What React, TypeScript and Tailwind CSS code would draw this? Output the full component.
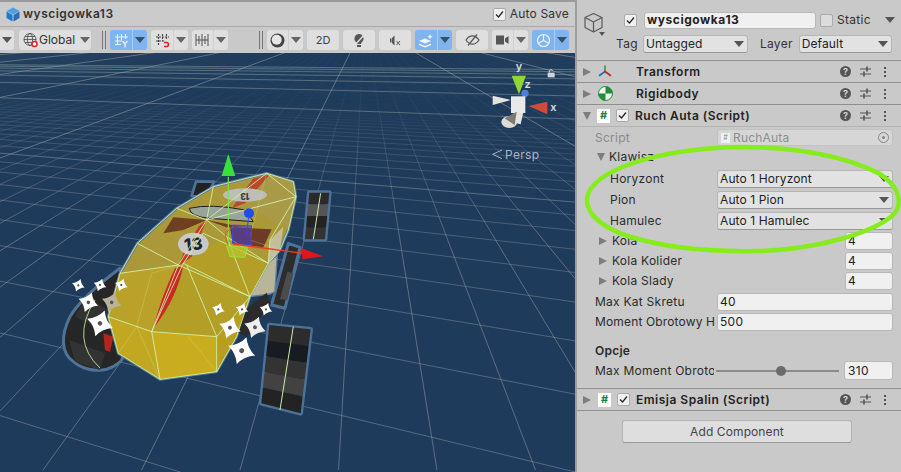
import type { ReactNode } from 'react';

const sans = 'font-["Inter","Liberation_Sans",sans-serif]';

const Caret = ({ className = 'border-t-[#555]' }: { className?: string }) => (
  <span className={`block w-0 h-0 border-x-[5px] border-x-transparent border-t-[6px] ${className}`} />
);

const ToolBtn = ({ w, active, split, children, className = '' }: { w: number; active?: boolean; split?: boolean; children: ReactNode; className?: string }) => (
  <div
    style={{ width: w }}
    className={`h-5 rounded-[3px] flex items-center shrink-0 ${active ? 'bg-[#80b4ef]' : 'bg-[#dfdfdf]'} ${className}`}
  >
    <div className="flex-1 flex items-center justify-center">{children}</div>
    {split && (
      <div className={`w-[15px] h-full flex items-center justify-center border-l ${active ? 'border-[#a9cdf5]' : 'border-[#cfcfcf]'}`}>
        <Caret className={active ? 'border-t-[#34506f]' : 'border-t-[#666]'} />
      </div>
    )}
  </div>
);

const Sep = ({ className = '' }: { className?: string }) => (
  <div className={`flex gap-[2px] h-[18px] shrink-0 ${className}`}>
    <div className="w-px bg-[#777]" />
    <div className="w-px bg-[#777]" />
  </div>
);

const Toolbar = () => (
  <div className={`h-[27px] flex items-center bg-[#c9c9c9] border-t border-[#aaa] overflow-hidden ${sans}`}>
    <ToolBtn w={14} className="rounded-l-none">
      <Caret />
    </ToolBtn>
    <div className="ml-[5px] w-[72px] h-5 rounded-[3px] bg-[#dfdfdf] flex items-center shrink-0 pl-[4px] gap-[1px] text-[12px] text-[#333]">
      <svg width="15" height="16" viewBox="0 0 15 16" fill="none" stroke="#555" strokeWidth="0.9">
        <circle cx="7" cy="7.5" r="6" />
        <ellipse cx="7" cy="7.5" rx="2.6" ry="6" />
        <path d="M1 7.5h12M2 4.5h10M2 10.5h10" />
        <circle cx="11.5" cy="12" r="2.5" fill="#fff" stroke="#d8232a" strokeWidth="1.5" />
      </svg>
      <span>Global</span>
      <Caret className="ml-[4px] border-t-[#666]" />
    </div>
    <Sep className="ml-[11px]" />
    <ToolBtn w={37} active split className="ml-[4px]">
      <svg width="15" height="15" viewBox="0 0 15 15" fill="none" stroke="#e8f2ff" strokeWidth="1.1">
        <path d="M3.500 1v10M7.500 1v6M11.500 1v5M1 4h13M1 8h7M1 11.500h6" />
        <path d="M8.500 8l2.500 3 2.500-3M11 11v3.500" strokeWidth="1.300" />
      </svg>
    </ToolBtn>
    <ToolBtn w={37} split className="ml-[4px]">
      <svg width="15" height="15" viewBox="0 0 15 15" fill="none" stroke="#444" strokeWidth="1.100">
        <path d="M3.500 1v11M7.500 1v7M11.500 1v6M1 4h13M1 8h9" strokeDasharray="2 1" />
        <path d="M9 9.500h2.500a2 2 0 010 4H9" stroke="#d8232a" strokeWidth="1.600" />
      </svg>
    </ToolBtn>
    <ToolBtn w={36} split className="ml-[4px]">
      <svg width="15" height="14" viewBox="0 0 15 14" fill="none" stroke="#555" strokeWidth="1">
        <path d="M1 1v12M4 3v8M7 1v12M10 3v8M13 1v12M1 7h12" />
      </svg>
    </ToolBtn>
    <Sep className="ml-[31px]" />
    <ToolBtn w={36} split className="ml-[4px]">
      <svg width="15" height="15" viewBox="0 0 15 15">
        <circle cx="7.500" cy="7.500" r="7" fill="#444" />
        <circle cx="6.700" cy="6.700" r="5" fill="#e6e6e6" />
      </svg>
    </ToolBtn>
    <ToolBtn w={32} className="ml-[4px]">
      <span className="text-[11px] text-[#444]">2D</span>
    </ToolBtn>
    <ToolBtn w={32} className="ml-[4px]">
      <svg width="14" height="15" viewBox="0 0 14 15" fill="#555">
        <path d="M7 1a4.600 4.600 0 00-3 8c.6.6 1 1.300 1 2h4c0-.7.4-1.400 1-2a4.600 4.600 0 00-3-8z" />
        <path d="M5 12h4v2H5z" />
        <path d="M2 13L12 2" stroke="#dfdfdf" strokeWidth="1.500" />
      </svg>
    </ToolBtn>
    <ToolBtn w={32} className="ml-[4px]">
      <svg width="13" height="11" viewBox="0 0 13 11" fill="#555">
        <path d="M1 3.500h1.500V7.500H1zM3 3l2.500-2.500v10L3 8z" />
        <path d="M7.500 6l3.500 4M11 6l-3.500 4" stroke="#555" strokeWidth="1" />
      </svg>
    </ToolBtn>
    <ToolBtn w={37} active split className="ml-[4px]">
      <svg width="17" height="15" viewBox="0 0 17 15" fill="#f3f8ff">
        <path d="M1 8l6-2.500L13 8 7 10.500z" />
        <path d="M1 10.500l6 2.500 6-2.500V12l-6 2.500L1 12z" />
        <path d="M12 1l.8 2 2 .8-2 .8-.8 2-.8-2-2-.8 2-.8z" />
      </svg>
    </ToolBtn>
    <ToolBtn w={32} className="ml-[4px]">
      <svg width="15" height="12" viewBox="0 0 15 12" fill="none" stroke="#555" strokeWidth="1.200">
        <path d="M1 6c2-3 4-4.200 6.500-4.200S12 3 14 6c-2 3-4 4.200-6.500 4.200S3 9 1 6z" />
        <path d="M3 11.500L12 .5" />
      </svg>
    </ToolBtn>
    <ToolBtn w={36} split className="ml-[4px]">
      <svg width="13" height="10" viewBox="0 0 13 10" fill="#555">
        <rect x="0" y="0.500" width="8" height="9" />
        <path d="M9 3.500l3.500-2.500v8L9 6.500z" />
      </svg>
    </ToolBtn>
    <ToolBtn w={37} active split className="ml-[4px]">
      <svg width="15" height="15" viewBox="0 0 15 15" fill="none" stroke="#eef6ff" strokeWidth="1.200">
        <circle cx="7.500" cy="7.500" r="6" />
        <path d="M7.500 7.500V1.500M7.500 7.500l-5.500 3M7.500 7.500l5.500 3" />
      </svg>
    </ToolBtn>
  </div>
);

const Star = ({ x, y, r, fill = '#fff' }: { x: number; y: number; r: number; fill?: string }) => {
  const c = r * 0.3;
  return (
    <g transform={`translate(${x} ${y}) rotate(20)`}>
      <path d={`M0 ${-r} Q${c} ${-c} ${r} 0 Q${c} ${c} 0 ${r} Q${-c} ${c} ${-r} 0 Q${-c} ${-c} 0 ${-r}Z`} fill={fill} />
      <circle r={r * 0.17} fill="#555" />
    </g>
  );
};

// one stripe of a wheel tread, between t0 and t1 along its long sides
const band = (p: number[][], t0: number, t1: number) => {
  const lerp = (a: number[], b: number[], t: number) => `${a[0] + (b[0] - a[0]) * t} ${a[1] + (b[1] - a[1]) * t}`;
  return `M${lerp(p[0], p[3], t0)}L${lerp(p[1], p[2], t0)}L${lerp(p[1], p[2], t1)}L${lerp(p[0], p[3], t1)}Z`;
};

const Tread = ({ pts, colors }: { pts: number[][]; colors: string[] }) => (
  <>
    <path d={`M${pts.map((q) => q.join(' ')).join('L')}Z`} fill="#2a2a2a" stroke="#4f7299" strokeWidth="14" strokeLinejoin="round" />
    {colors.map((c, i) => (
      <path key={i} d={band(pts, i / colors.length, (i + 1) / colors.length)} fill={c} />
    ))}
  </>
);

// perspective grid, both families fitted against the screenshot
const VA = [-1150, 55];
const VB = [365, 23];
const linesA = Array.from({ length: 130 }, (_, k) => k - 1).map((k) => ({
  k,
  y: 55 + 1 / (0.0024 + 0.00055 * k),
}));
const linesB = Array.from({ length: 161 }, (_, i) => i - 80);

// front and rear wire segments of the box collider, in crop coordinates
const outline = 'M650 100L490 140L380 205L262 310L210 400L175 530L205 640L330 718L500 695L560 590L600 470L655 370L690 330L715 270L738 170L730 125Z';
const wires = 'M175 530L305 575L500 590L600 470L400 370L305 575L330 718M500 590L500 695M305 575L385 375L210 400M385 375L262 310M385 375L470 240L380 205M470 240L490 140M470 240L650 100L738 170L470 240M385 375L600 470M400 370L460 280L655 370M600 470L530 290L470 240M530 290L655 370M738 170L660 300L655 370M500 590L410 375';
const wiresFaint = 'M205 640L260 560L330 718M260 560L305 400L385 375M415 590L500 695M600 300L690 330M650 100L600 290';

const Scene = () => (
  <div className="flex-1 min-h-0 bg-[#1f3b5b]">
    <svg className="block w-full h-full" viewBox="0 53 575 419" preserveAspectRatio="none">
      <defs>
        <linearGradient id="fadeB" gradientUnits="userSpaceOnUse" x1="0" y1="90" x2="0" y2="240">
          <stop offset="0" stopColor="#9aa0a6" stopOpacity="0.04" />
          <stop offset="1" stopColor="#9aa0a6" stopOpacity="0.55" />
        </linearGradient>
      </defs>
      <g strokeWidth="0.9" fill="none">
        {linesA.map(({ k, y }) => {
          const major = k % 16 === 8;
          const x2 = 700;
          const yEnd = VA[1] + ((y - VA[1]) * (x2 - VA[0])) / (574 - VA[0]);
          return (
            <line
              key={k}
              x1={VA[0]}
              y1={VA[1]}
              x2={x2}
              y2={yEnd}
              stroke="#9aa0a6"
              strokeOpacity={major ? 0.55 : Math.max(0.02, 0.5 - k * 0.02)}
            />
          );
        })}
        {linesB.map((i) => {
          const major = ((i % 10) + 10) % 10 === 1;
          const x = 43 + i * 98.5;
          return <path key={i} d={`M${VB[0]} ${VB[1]}L${x} 470`} stroke={major ? '#9aa0a6' : 'url(#fadeB)'} strokeOpacity={major ? 0.6 : 1} />;
        })}
      </g>

      <g transform="translate(50 140) scale(0.3333)">
        {/* wheels */}
        <Tread pts={[[778, 158], [838, 158], [825, 298], [765, 298]]} colors={['#2a2a2a', '#555', '#232323', '#333']} />
        <Tread pts={[[658, 555], [782, 568], [752, 820], [634, 790]]} colors={['#2c2c2c', '#181c22', '#333', '#424242', '#232323']} />
        <path
          d="M210 385C150 430 90 480 60 530C30 590 35 640 70 665C100 690 140 695 170 688C200 680 218 660 218 650L230 500Z"
          fill="#262626"
          stroke="#4f7299"
          strokeWidth="9"
          strokeLinejoin="round"
        />
        <path d="M58 600L165 640L150 690L75 665ZM110 470L190 520L165 570L75 530Z" fill="#333" />
        <path d="M425 168L438 125L492 125L470 172Z" fill="#222" stroke="#4f7299" strokeWidth="8" strokeLinejoin="round" />
        <path d="M715 310L750 322L705 505L665 495Z" fill="#2c2c2c" stroke="#4f7299" strokeWidth="9" strokeLinejoin="round" />
        <path d="M730 400L712 480L690 478L712 395Z" fill="#4b4b4b" />
        <path d="M730 560L690 810M812 160L790 298" stroke="#c9efa8" strokeWidth="3" fill="none" />
        <path d="M135 480Q60 600 150 684" stroke="#c9efa8" strokeWidth="3" fill="none" opacity="0.85" />
        <path d="M160 580L190 590L180 635L165 630Z" fill="#b3261f" />

        {/* body */}
        <path d={outline} fill="#ab9838" stroke="#5a7f9c" strokeWidth="8" strokeLinejoin="round" />
        <path d="M600 470L655 370L682 345L675 455L660 462Z" fill="#b8b59a" stroke="#5a7f9c" strokeWidth="4" />
        <path d="M560 530L650 458L662 490L590 590L550 570Z" fill="#2b2b2b" />
        <path d="M305 575L500 590L600 470L655 370L530 290L385 375Z" fill="#b39e28" />
        <path d="M175 530L305 575L385 375L210 400Z" fill="#baa22a" />
        <path d="M175 530L305 575L330 718L205 640Z" fill="#c2a822" />
        <path d="M305 575L500 590L500 695L330 718Z" fill="#c9ad1f" />
        <path d="M500 590L600 470L560 590L500 695Z" fill="#b89f22" />
        <path d="M650 100L730 125L738 170L715 270L600 200Z" fill="#a99a48" />
        <path d="M655 370L690 330L700 260L660 300Z" fill="#c4bf9a" />

        {/* windows */}
        <path d="M340 280L370 232L470 240L400 270Z" fill="#6e3f20" />
        <path d="M470 240L580 262L530 262Z" fill="#6e3f20" />
        <path d="M540 262L665 268L640 322L548 310Z" fill="#6c3a26" />
        <path d="M418 205Q480 190 585 210L610 245L480 235Q420 230 418 205Z" fill="#9aa59a" stroke="#1c1c1c" strokeWidth="3" />

        {/* stripe and numbers */}
        <path d="M310 565Q330 480 375 385L400 378Q378 480 310 565Z" fill="#c92a25" />
        <path d="M385 378L400 340L445 260L470 240L425 350Z" fill="#c53a2c" />
        <path d="M545 205L610 115L660 103L585 190Z" fill="#b8492f" />
        <ellipse cx="430" cy="312" rx="46" ry="34" fill="#c6c9c8" />
        <text x="430" y="330" textAnchor="middle" fontFamily="Inter, sans-serif" fontWeight="800" fontSize="50" fill="#222" transform="rotate(-6 430 312)">13</text>
        <ellipse cx="585" cy="165" rx="66" ry="20" fill="#bdbfb6" />
        <text x="585" y="176" textAnchor="middle" fontFamily="Inter, sans-serif" fontWeight="800" fontSize="26" fill="#3a3a3a" transform="rotate(180 585 168)">13</text>

        {/* wireframe */}
        <path d={wiresFaint} fill="none" stroke="#d7e8a5" strokeOpacity="0.4" strokeWidth="2" />
        <path d={outline} fill="none" stroke="#d2f3a8" strokeWidth="2.600" strokeLinejoin="round" />
        <path d={wires} fill="none" stroke="#d2f3a8" strokeWidth="2.600" strokeLinejoin="round" />

        {/* move gizmo */}
        <path d="M548 255L605 258L603 315L548 310Z" fill="#4c3fc0" fillOpacity="0.6" stroke="#3c4cd8" strokeWidth="3" />
        <path d="M535 110V315" stroke="#7ee04a" strokeWidth="3.500" />
        <path d="M535 42L515 108H556Z" fill="#38e03a" />
        <path d="M550 312L760 340" stroke="#ef3a1d" strokeWidth="4" />
        <path d="M525 280L550 260M525 280L535 320" stroke="#e0521d" strokeWidth="2.500" fill="none" />
        <path d="M820 349L755 325L757 358Z" fill="#e4151a" />
        <path d="M597 220L590 285" stroke="#2a48ff" strokeWidth="3" />
        <circle cx="597" cy="220" r="15" fill="#1d4fe8" />
        <path d="M530 318L592 322L585 352L540 350Z" fill="#b6c42c" fillOpacity="0.75" stroke="#9ae23c" strokeWidth="3" />

        {/* bones */}
        <Star x={85} y={436} r={20} />
        <Star x={150} y={435} r={20} />
        <Star x={214} y={435} r={20} />
        <Star x={115} y={487} r={31} />
        <Star x={150} y={550} r={41} />
        <Star x={185} y={487} r={31} fill="#b8b39a" />
        <Star x={505} y={508} r={20} />
        <Star x={576} y={508} r={20} />
        <Star x={648} y={508} r={20} />
        <Star x={540} y={563} r={34} />
        <Star x={615} y={562} r={34} fill="#eee" />
        <Star x={575} y={632} r={43} />
      </g>

      {/* scene gizmo */}
      <g transform="translate(470 55) scale(0.3333)">
        <path d="M125 62H168L147 118Z" fill="#8fd637" />
        <path d="M232 140L232 178L175 153Z" fill="#cf4c3c" />
        <circle cx="165" cy="115" r="11" fill="#4d7edc" />
        <path d="M122 135L68 122V150Z" fill="#e4e2dc" />
        <rect x="123" y="124" width="43" height="50" fill="#e9e9e9" />
        <ellipse cx="118" cy="201" rx="24" ry="18" fill="#dedbd6" />
        <path d="M132 172H160L152 208L122 200Z" fill="#e4e4e4" />
        <path d="M140 170L104 190L134 210Z" fill="#7d7a74" />
        <g fontFamily="Inter, sans-serif" fontWeight="600" fill="#d5dce3" fontSize="33">
          <text x="147" y="46" textAnchor="middle">y</text>
          <text x="173" y="100" textAnchor="middle">z</text>
          <text x="250" y="168" textAnchor="middle">x</text>
        </g>
        <rect x="233" y="53" width="21" height="14" fill="#cfd5db" />
        <path d="M238 53v-6a5.500 5.500 0 0110 0" fill="none" stroke="#cfd5db" strokeWidth="3" />
        <path d="M96 285L68 298L96 311" fill="none" stroke="#aab4c0" strokeWidth="3" />
      </g>
      <text x="505" y="159" fontFamily="Inter, sans-serif" fontSize="12" letterSpacing="0.3" fill="#a9b4c1">Persp</text>
    </svg>
  </div>
);

const Check = ({ on = true, className = '' }: { on?: boolean; className?: string }) => (
  <div className={`w-[13px] h-[13px] rounded-[2px] bg-[#f0f0f0] border border-[#aaa] flex items-center justify-center shrink-0 ${className}`}>
    {on && (
      <svg width="9" height="9" viewBox="0 0 9 9" fill="none" stroke="#222" strokeWidth="1.200">
        <path d="M1 4.500L3.500 7L8 1.500" />
      </svg>
    )}
  </div>
);

const Tri = ({ open, className = '' }: { open?: boolean; className?: string }) =>
  open ? (
    <span className={`block w-0 h-0 border-x-[4.5px] border-x-transparent border-t-[8px] border-t-[#7d7d7d] ${className}`} />
  ) : (
    <span className={`block w-0 h-0 border-y-[4.5px] border-y-transparent border-l-[8px] border-l-[#7d7d7d] ${className}`} />
  );

const ScriptIcon = () => (
  <div className="w-[13px] h-[14px] rounded-[1px] bg-white flex items-center justify-center text-[11px] font-bold leading-none text-[#18803a] shrink-0">
    #
  </div>
);

const TransformIcon = () => (
  <svg width="14" height="13" viewBox="0 0 14 13" fill="none" strokeWidth="1.600" strokeLinecap="round">
    <path d="M7 6.500V1" stroke="#2f9b3a" />
    <path d="M7 6.500L1.500 10.500" stroke="#2468c0" />
    <path d="M7 6.500L12.500 10.500" stroke="#c6262c" />
  </svg>
);

const RigidIcon = () => (
  <svg width="15" height="15" viewBox="0 0 15 15">
    <circle cx="7.500" cy="7.500" r="7" fill="#f3f3f3" stroke="#1d8f3a" strokeWidth="1" />
    <path d="M7.500 .5A7 7 0 0114.500 7.500H7.500ZM7.500 14.500A7 7 0 01.5 7.500H7.500Z" fill="#1d8f3a" />
  </svg>
);

const HeaderActions = () => (
  <div className="ml-auto flex items-center">
    <div className="w-[11px] h-[11px] rounded-full bg-[#555] text-[#d5d5d5] text-[9px] font-bold leading-[11px] text-center">?</div>
    <svg className="ml-[9px]" width="11" height="11" viewBox="0 0 11 11" stroke="#555" strokeWidth="1.200" fill="none">
      <path d="M0 3h11M0 8h11" />
      <path d="M7 .5v5M4 5.500v5" strokeWidth="1.600" />
    </svg>
    <div className="ml-[13px] mr-[15px] flex flex-col gap-[2px]">
      <span className="block w-[2px] h-[2px] bg-[#555]" />
      <span className="block w-[2px] h-[2px] bg-[#555]" />
      <span className="block w-[2px] h-[2px] bg-[#555]" />
    </div>
  </div>
);

const CompHeader = ({ open, icon, check, title }: { open?: boolean; icon: ReactNode; check?: boolean; title: string }) => (
  <div className="h-[22px] flex items-center border-t border-[#8f8f8f] pl-[6px] bg-[#c9c9c9]">
    <Tri open={open} />
    <div className={`${open ? 'ml-[6px]' : 'ml-[7px]'} flex items-center ${check ? '' : 'w-[15px]'}`}>{icon}</div>
    {check && <Check className="ml-[6px]" />}
    <span className={`font-semibold text-[12px] tracking-[0.5px] text-[#222] ${check ? 'ml-[6px]' : 'ml-[23px]'}`}>{title}</span>
    <HeaderActions />
  </div>
);

const Dropdown = ({ value, className = '' }: { value: string; className?: string }) => (
  <div className={`h-[18px] rounded-[3px] bg-[#e2e2e2] border border-[#b5b5b5] border-b-[#999] flex items-center pl-[2px] pr-[3px] text-[12px] text-[#222] tracking-[0.1px] ${className}`}>
    <span>{value}</span>
    <Caret className="ml-auto border-t-[#555]" />
  </div>
);

const Field = ({ value, className = '' }: { value: string; className?: string }) => (
  <div className={`h-[18px] rounded-[3px] bg-[#f0f0f0] border border-[#b8b8b8] flex items-center pl-[2px] text-[12px] text-[#222] tracking-[0.3px] ${className}`}>
    {value}
  </div>
);

const Label = ({ children, className = '' }: { children: ReactNode; className?: string }) => (
  <span className={`block overflow-hidden whitespace-nowrap text-[12px] text-[#2b2b2b] tracking-[0.25px] ${className}`}>{children}</span>
);

const Inspector = () => (
  <div className={`relative w-[326px] h-full shrink-0 bg-[#c9c9c9] border-l-2 border-[#9d9d9d] overflow-hidden ${sans}`}>
    {/* object header */}
    <div className="h-[60px] flex">
      <div className="relative w-[34px] pl-[6px] pt-[12px]">
        <svg width="21" height="21" viewBox="0 0 21 21" fill="none" stroke="#5a5a5a" strokeWidth="1.200" strokeLinejoin="round">
          <path d="M10.500 1.500L19 5.500V15.500L10.500 20L2 15.500V5.500Z" />
          <path d="M2 5.500L10.500 10L19 5.500M10.500 10V20" />
        </svg>
        <span className="absolute left-[22px] top-[32px] block w-0 h-0 border-x-[3.500px] border-x-transparent border-t-[4px] border-t-[#555]" />
      </div>
      <div className="flex-1 pt-[10px]">
        <div className="flex items-center h-[20px]">
          <Check className="ml-[13px]" />
          <div className="ml-[7px] w-[172px] h-[17px] rounded-[3px] bg-[#f0f0f0] border border-[#b8b8b8] flex items-center pl-[2px] font-bold text-[12px] tracking-[0.55px] text-[#222]">
            wyscigowka13
          </div>
          <div className="ml-[4px] w-[13px] h-[13px] rounded-[2px] bg-[#dcdcdc] border border-[#aaa]" />
          <span className="ml-[4px] text-[12px] text-[#333] tracking-[0.3px]">Static</span>
          <Caret className="ml-[14px] border-t-[#555]" />
        </div>
        <div className="mt-[4px] flex items-center h-[19px] text-[12px] text-[#333] tracking-[0.3px]">
          <span className="ml-[5px]">Tag</span>
          <Dropdown value="Untagged" className="ml-[5px] w-[105px] shrink-0" />
          <span className="ml-[12px]">Layer</span>
          <Dropdown value="Default" className="ml-[6px] w-[93px] shrink-0" />
        </div>
      </div>
    </div>

    <CompHeader icon={<TransformIcon />} title="Transform" />
    <CompHeader icon={<RigidIcon />} title="Rigidbody" />
    <CompHeader open icon={<ScriptIcon />} check title="Ruch Auta (Script)" />

    {/* ruch auta body */}
    <div className="border-t border-[#b4b4b4] pl-[18px] pr-[8px]">
      <div className="h-[21px] flex items-center">
        <Label className="w-[122px] !text-[#8a8a8a]">Script</Label>
        <div className="flex-1 h-[17px] rounded-[3px] bg-[#d6d6d6] border border-[#c2c2c2] flex items-center pl-[3px] text-[12px] text-[#8e8e8e] tracking-[0.2px]">
          <span className="w-[9px] h-[10px] mr-[3px] bg-[#f1f1f1] text-[7px] leading-[10px] text-center text-[#6a9a7a]">#</span>
          RuchAuta
          <span className="ml-auto mr-[3px] w-[11px] h-[11px] rounded-full border border-[#888] flex items-center justify-center">
            <span className="block w-[3px] h-[3px] rounded-full bg-[#888]" />
          </span>
        </div>
      </div>
      <div className="h-[18px] flex items-center pl-[2px]">
        <Tri open />
        <Label className="ml-[4px]">Klawisz</Label>
      </div>
      <div className="flex flex-col gap-[3px] mt-[4px]">
        {[
          ['Horyzont', 'Auto 1 Horyzont'],
          ['Pion', 'Auto 1 Pion'],
          ['Hamulec', 'Auto 1 Hamulec'],
        ].map(([label, value]) => (
          <div key={label} className="h-[18px] flex items-center">
            <Label className="w-[122px] pl-[15px]">{label}</Label>
            <Dropdown value={value} className="flex-1" />
          </div>
        ))}
      </div>
      <div className="flex flex-col gap-[2px] mt-[2px]">
        {['Kola', 'Kola Kolider', 'Kola Slady'].map((label) => (
          <div key={label} className="h-[18px] flex items-center">
            <Tri className="ml-[4px]" />
            <Label className="ml-[5px]">{label}</Label>
            <Field value="4" className="ml-auto w-[48px]" />
          </div>
        ))}
      </div>
      <div className="h-[18px] flex items-center mt-[3px]">
        <Label className="w-[122px]">Max Kat Skretu</Label>
        <Field value="40" className="flex-1" />
      </div>
      <div className="h-[18px] flex items-center mt-[2px]">
        <Label className="w-[122px] !tracking-[0.15px]">Moment Obrotowy H</Label>
        <Field value="500" className="flex-1" />
      </div>
      <Label className="mt-[12px] h-[16px] leading-[16px] font-semibold">Opcje</Label>
      <div className="h-[19px] flex items-center mt-[2px]">
        <Label className="w-[119px]">Max Moment Obrotow</Label>
        <div className="relative ml-[2px] w-[123px] h-[2px] bg-[#8a8a8a]">
          <span className="absolute left-[60px] top-[-4px] block w-[10px] h-[10px] rounded-full bg-[#6b6b6b]" />
        </div>
        <Field value="310" className="ml-auto w-[49px] h-[19px] pl-[3px]" />
      </div>
    </div>

    <div className="mt-[8px]">
      <CompHeader icon={<ScriptIcon />} check title="Emisja Spalin (Script)" />
    </div>
    <div className="border-t border-[#8f8f8f] flex justify-center pt-[9px] pr-[4px]">
      <div className="w-[230px] h-[23px] rounded-[3px] bg-[#dedede] border border-[#b2b2b2] border-b-[#999] flex items-center justify-center text-[12px] text-[#444] tracking-[0.1px]">
        Add Component
      </div>
    </div>

    {/* hand drawn highlight */}
    <svg className="absolute left-[-2px] top-0 pointer-events-none" width="326" height="472" viewBox="575 0 326 472" fill="none">
      <path
        d="M742 147C668 148 610 165 592 187C579 204 592 224 628 236C668 249 712 252 760 251C816 249 870 234 892 216C904 205 900 187 880 174C846 156 796 147 742 147Z"
        stroke="#86ec1d"
        strokeWidth="4.500"
      />
    </svg>
  </div>
);

export default function App() {
  return (
    <div className="w-[901px] h-[472px] flex overflow-hidden bg-[#c9c9c9]">
      <div className="w-[575px] h-full shrink-0 flex flex-col">
        <div className={`h-[26px] bg-[#cbcbcb] border-t-2 border-[#9a9a9a] flex items-center pl-[6px] ${sans}`}>
          <svg width="14" height="15" viewBox="0 0 14 15">
            <path d="M7 .5L13.500 4L7 7.500L.5 4Z" fill="#4aa0e8" />
            <path d="M.5 4.500L6.500 8V14.500L.5 11Z" fill="#1f78cf" />
            <path d="M13.500 4.500L7.500 8V14.500L13.500 11Z" fill="#2a6db8" />
          </svg>
          <span className="ml-[3px] font-semibold text-[12px] tracking-[0.5px] text-[#333]">wyscigowka13</span>
          <Check className="ml-auto" />
          <span className="ml-[4px] mr-[6px] text-[12px] tracking-[0.2px] text-[#333]">Auto Save</span>
        </div>
        <Toolbar />
        <Scene />
      </div>
      <Inspector />
    </div>
  );
}
